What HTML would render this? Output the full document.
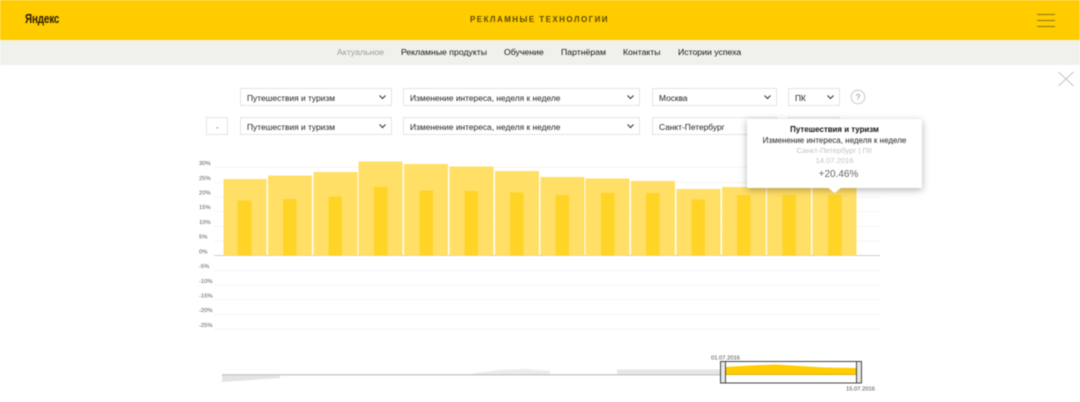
<!DOCTYPE html>
<html lang="ru"><head><meta charset="utf-8"><title>Рекламные технологии</title>
<style>
html,body{margin:0;padding:0;background:#fff}
#p{position:relative;width:1080px;height:402px;overflow:hidden;background:#fff;font-family:"Liberation Sans","Noto Sans CJK SC",sans-serif;filter:blur(.45px)}
#p div{position:absolute}
.t{white-space:nowrap;color:#333;line-height:12px}
.n{white-space:nowrap;color:#111;font-size:8.7px;line-height:12px;top:46px}
.s{background:#fff;border:1px solid #e4e4e0;box-sizing:border-box;height:18px}
.s span{position:absolute;left:6px;top:2.500px;font-size:8.400px;line-height:12px;color:#222;white-space:nowrap}
.s svg{position:absolute;top:6px;right:5px}
.c{text-align:center;left:747px;width:175px;white-space:nowrap;line-height:11px}
</style></head><body>
<div id="p">
<div style="left:0;top:0;width:1080px;height:40px;background:#fc0"></div>
<div style="left:0;top:40px;width:1080px;height:25px;background:#f1f1ec"></div>
<div class="t" style="left:25px;top:11px;font-size:13px;line-height:16px;font-weight:bold;color:#2a1c00;transform:scaleX(.76);transform-origin:0 0;letter-spacing:-.2px">Яндекс</div>
<div class="t" style="left:470px;top:14px;font-size:8px;font-weight:bold;letter-spacing:1.450px;color:#5a4a00">РЕКЛАМНЫЕ ТЕХНОЛОГИИ</div>
<div style="left:1037px;top:14px;width:18px;height:1px;background:#8a7510"></div>
<div style="left:1037px;top:20px;width:18px;height:1px;background:#8a7510"></div>
<div style="left:1037px;top:26px;width:18px;height:1px;background:#8a7510"></div>
<div class="n" style="left:337px;color:#999">Актуальное</div>
<div class="n" style="left:401px">Рекламные продукты</div>
<div class="n" style="left:504px">Обучение</div>
<div class="n" style="left:561px">Партнёрам</div>
<div class="n" style="left:623px">Контакты</div>
<div class="n" style="left:678px">Истории успеха</div>
<svg style="position:absolute;left:1057px;top:71px" width="18" height="16"><path d="M1.500 1L16.500 15M16.500 1L1.500 15" stroke="#c4c4c4" fill="none"/></svg>

<div class="s" style="left:240px;top:88px;width:152px"><span>Путешествия и туризм</span><svg width="7" height="5"><path d="M.5 .5L3.500 3.500 6.500 .5" stroke="#444" stroke-width="1.200" fill="none"/></svg></div>
<div class="s" style="left:403px;top:88px;width:237px"><span>Изменение интереса, неделя к неделе</span><svg width="7" height="5"><path d="M.5 .5L3.500 3.500 6.500 .5" stroke="#444" stroke-width="1.200" fill="none"/></svg></div>
<div class="s" style="left:652px;top:88px;width:125px"><span>Москва</span><svg width="7" height="5"><path d="M.5 .5L3.500 3.500 6.500 .5" stroke="#444" stroke-width="1.200" fill="none"/></svg></div>
<div class="s" style="left:788px;top:88px;width:52px"><span>ПК</span><svg width="7" height="5"><path d="M.5 .5L3.500 3.500 6.500 .5" stroke="#444" stroke-width="1.200" fill="none"/></svg></div>
<svg style="position:absolute;left:850px;top:89px" width="16" height="16"><circle cx="8" cy="8" r="6.800" fill="none" stroke="#c8c8c8"/><text x="8" y="11" text-anchor="middle" font-size="8" fill="#888" font-family="Liberation Sans">?</text></svg>

<div class="s" style="left:206px;top:117px;width:22px"><span style="left:9px;color:#666">-</span></div>
<div class="s" style="left:240px;top:117px;width:152px"><span>Путешествия и туризм</span><svg width="7" height="5"><path d="M.5 .5L3.500 3.500 6.500 .5" stroke="#444" stroke-width="1.200" fill="none"/></svg></div>
<div class="s" style="left:403px;top:117px;width:237px"><span>Изменение интереса, неделя к неделе</span><svg width="7" height="5"><path d="M.5 .5L3.500 3.500 6.500 .5" stroke="#444" stroke-width="1.200" fill="none"/></svg></div>
<div class="s" style="left:652px;top:117px;width:125px"><span>Санкт-Петербург</span></div>
<div class="s" style="left:788px;top:117px;width:52px"></div>

<svg style="position:absolute;left:0;top:0" width="1080" height="402" font-family="Liberation Sans" font-size="5.800" fill="#555">
<g stroke="#f5f5f5"><path d="M214 167.500H880M214 182.500H880M214 197H880M214 211.500H880M214 226.500H880M214 241H880M214 270.500H880M214 285H880M214 299.500H880M214 314.500H880M214 329H880"/></g>
<path d="M214 255.500H880" stroke="#cfcfcf"/>
<g>
<text x="199" y="165">30%</text><text x="199" y="180">25%</text><text x="199" y="194.500">20%</text><text x="199" y="209">15%</text><text x="199" y="224">10%</text><text x="199" y="238.500">5%</text><text x="199" y="253.500">0%</text><text x="199" y="268">-5%</text><text x="199" y="283">-10%</text><text x="199" y="297.500">-15%</text><text x="199" y="312">-20%</text><text x="199" y="327">-25%</text>
</g>
<g fill="#ffdf66">
<rect x="223.500" y="179" width="43" height="76.500"/>
<rect x="268" y="175.500" width="44" height="80"/>
<rect x="313.500" y="172" width="44" height="83.500"/>
<rect x="358.500" y="161.500" width="44" height="94"/>
<rect x="404" y="164" width="44" height="91.500"/>
<rect x="449.500" y="166.500" width="44" height="89"/>
<rect x="495" y="171" width="44" height="84.500"/>
<rect x="540.500" y="177" width="44" height="78.500"/>
<rect x="585.500" y="178.500" width="44" height="77"/>
<rect x="631" y="181" width="44" height="74.500"/>
<rect x="676.500" y="189" width="44" height="66.500"/>
<rect x="722" y="187" width="44" height="68.500"/>
<rect x="767" y="184" width="44" height="71.500"/>
<rect x="812.500" y="182" width="44" height="73.500"/>
</g>
<g fill="#ffd426">
<rect x="237.500" y="200.500" width="14" height="55"/>
<rect x="283" y="199" width="13.500" height="56.500"/>
<rect x="328.500" y="196.500" width="13.500" height="59"/>
<rect x="374" y="187" width="13.500" height="68.500"/>
<rect x="419.500" y="190.500" width="13.500" height="65"/>
<rect x="464.500" y="191" width="13.500" height="64.500"/>
<rect x="510" y="192.500" width="13.500" height="63"/>
<rect x="555.500" y="195" width="13.500" height="60.500"/>
<rect x="601" y="193" width="13.500" height="62.500"/>
<rect x="646" y="193" width="13.500" height="62.500"/>
<rect x="691.500" y="199.500" width="13.500" height="56"/>
<rect x="737" y="195" width="13.500" height="60.500"/>
<rect x="782.500" y="195" width="13.500" height="60.500"/>
<rect x="828" y="195" width="13.500" height="60.500"/>
</g>
<path d="M222 375H280V378L222 382Z" fill="#e4e4e4"/>
<path d="M472 373.500L500 370L525 369L550 371V374.500H472Z" fill="#ececec"/>
<path d="M617 369.500H720V374.500H617Z" fill="#e6e6e6"/>
<path d="M222 374.800H720" stroke="#c9c9c9" stroke-width="1.400"/>
<path d="M725 367L750 365.500L775 364.500L800 366L825 367.500L857 368V374.500H725Z" fill="#fc0"/>
<path d="M725 374.500H857" stroke="#d9b000"/>
<rect x="720.500" y="361.500" width="141" height="21.500" fill="none" stroke="#444"/>
<rect x="720.500" y="361.500" width="5" height="21.500" fill="#e8e8e8" stroke="#444"/>
<rect x="856.500" y="361.500" width="5" height="21.500" fill="#e8e8e8" stroke="#444"/>
<text x="711" y="359.500" fill="#444">01.07.2016</text>
<text x="846" y="390.500" fill="#444">15.07.2016</text>
</svg>

<div style="left:747px;top:119px;width:175px;height:69px;background:#fff;box-shadow:0 2px 7px rgba(0,0,0,.3)"></div>
<svg style="position:absolute;left:827px;top:187px" width="16" height="7"><path d="M0 0H15L7.500 6Z" fill="#fff"/></svg>
<div class="c" style="top:124px;font-size:7.900px;font-weight:bold;color:#111">Путешествия и туризм</div>
<div class="c" style="top:135px;font-size:8px;color:#222">Изменение интереса, неделя к неделе</div>
<div class="c" style="top:145px;font-size:7.600px;color:#c4c4c4">Санкт-Петербург | ПК</div>
<div class="c" style="top:155px;font-size:7.600px;color:#c4c4c4">14.07.2016</div>
<div class="c" style="top:169px;font-size:10px;color:#666;left:751px">+20.46%</div>
</div>
</body></html>
